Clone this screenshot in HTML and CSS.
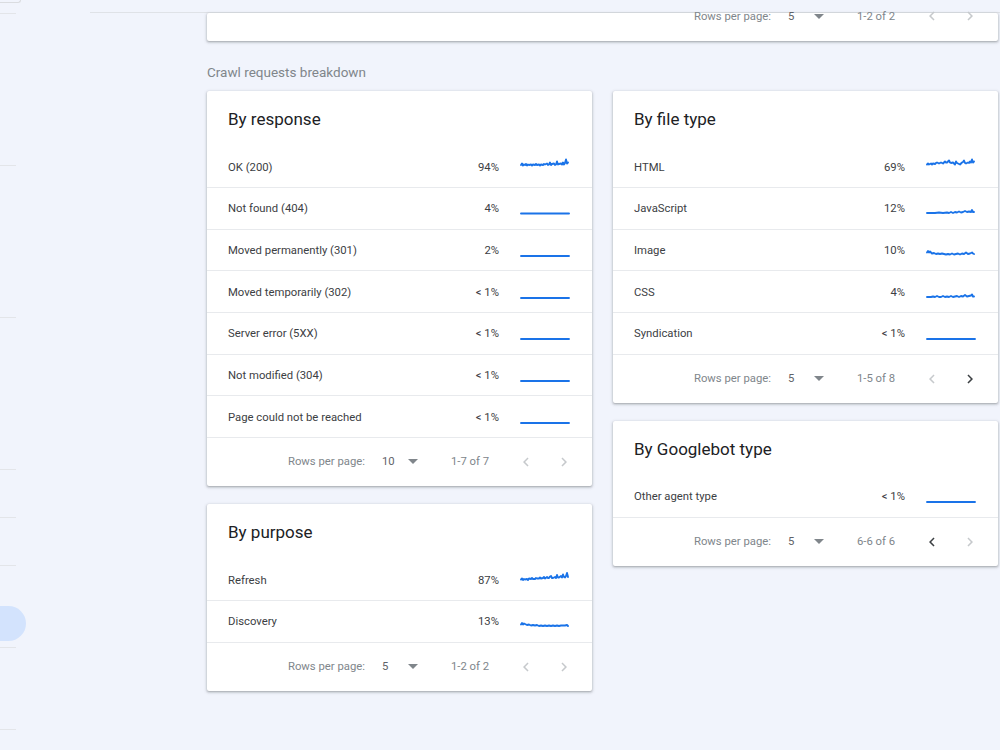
FILE: index.html
```html
<!DOCTYPE html>
<html lang="en">
<head>
<meta charset="utf-8">
<title>Crawl stats</title>
<link rel="stylesheet" href="styles.css">
</head>
<body>
<div class="app">
  <aside class="sidebar">
    <div class="nav-btn"></div>
    <div class="nav-div first"></div>
    <div class="gap-lg"></div>
    <div class="nav-div"></div>
    <div class="gap-lg"></div>
    <div class="nav-div"></div>
    <div class="gap-lg"></div>
    <div class="nav-div"></div>
    <div class="gap-sm"></div>
    <div class="nav-div"></div>
    <div class="gap-sm"></div>
    <div class="nav-div"></div>
    <div class="nav-pill"></div>
    <div class="nav-div"></div>
    <div class="gap-md"></div>
    <div class="nav-div"></div>
  </aside>

  <main class="main">
    <div class="topbar"></div>
    <div class="content">
      <section class="card card-top">
        <div class="pager">
          <span class="pager-label">Rows per page:</span>
          <span class="pager-select"><span class="pager-value">5</span><svg class="caret" viewBox="7 10 10 5" width="10" height="5"><path d="M7 10l5 5 5-5z"/></svg></span>
          <span class="pager-range">1-2 of 2</span>
          <span class="pager-btn off"><svg viewBox="0 0 24 24" width="18" height="18"><path d="M15.41 7.41L14 6l-6 6 6 6 1.41-1.41L10.83 12z"/></svg></span>
          <span class="pager-btn off"><svg viewBox="0 0 24 24" width="18" height="18"><path d="M10 6L8.59 7.41 13.17 12l-4.58 4.59L10 18l6-6z"/></svg></span>
        </div>
      </section>

      <h2 class="section-label">Crawl requests breakdown</h2>

      <div class="columns">
        <div class="column">
          <section class="card">
            <h3 class="card-title">By response</h3>
            <div class="row"><span class="row-label">OK (200)</span><span class="row-pct">94%</span><svg class="spark" viewBox="0 0 48 16"><polyline points="0,7 1,5.5 2,7.5 3,6.5 4,7 5,6 6,7.5 7,6.5 8,7 10,6.5 11,7.5 12,6.5 14,7 15,6 16,7 18,6.5 19,7.5 20,6.5 22,7 23,6 24,6.5 26,5.5 27,7 28,6.5 29,4.5 30,7 31,6 33,5.5 34,7 35,6.5 36,3.5 37,6.5 38,6 40,5.5 41,6.5 42,4.5 43,6.5 44,5 45,1.5 46,5.5 47,4.5"/></svg></div>
            <div class="row"><span class="row-label">Not found (404)</span><span class="row-pct">4%</span><svg class="spark" viewBox="0 0 48 16"><polyline points="0,14.5 48,14.5"/></svg></div>
            <div class="row"><span class="row-label">Moved permanently (301)</span><span class="row-pct">2%</span><svg class="spark" viewBox="0 0 48 16"><polyline points="0,15 48,15"/></svg></div>
            <div class="row"><span class="row-label">Moved temporarily (302)</span><span class="row-pct">&lt; 1%</span><svg class="spark" viewBox="0 0 48 16"><polyline points="0,15 48,15"/></svg></div>
            <div class="row"><span class="row-label">Server error (5XX)</span><span class="row-pct">&lt; 1%</span><svg class="spark" viewBox="0 0 48 16"><polyline points="0,15 48,15"/></svg></div>
            <div class="row"><span class="row-label">Not modified (304)</span><span class="row-pct">&lt; 1%</span><svg class="spark" viewBox="0 0 48 16"><polyline points="0,15 48,15"/></svg></div>
            <div class="row"><span class="row-label">Page could not be reached</span><span class="row-pct">&lt; 1%</span><svg class="spark" viewBox="0 0 48 16"><polyline points="0,15 48,15"/></svg></div>
            <div class="pager">
              <span class="pager-label">Rows per page:</span>
              <span class="pager-select"><span class="pager-value">10</span><svg class="caret" viewBox="7 10 10 5" width="10" height="5"><path d="M7 10l5 5 5-5z"/></svg></span>
              <span class="pager-range">1-7 of 7</span>
              <span class="pager-btn off"><svg viewBox="0 0 24 24" width="18" height="18"><path d="M15.41 7.41L14 6l-6 6 6 6 1.41-1.41L10.83 12z"/></svg></span>
              <span class="pager-btn off"><svg viewBox="0 0 24 24" width="18" height="18"><path d="M10 6L8.59 7.41 13.17 12l-4.58 4.59L10 18l6-6z"/></svg></span>
            </div>
          </section>

          <section class="card">
            <h3 class="card-title">By purpose</h3>
            <div class="row"><span class="row-label">Refresh</span><span class="row-pct">87%</span><svg class="spark" viewBox="0 0 48 16"><polyline points="0,8.5 1,7.5 2,9 3,8 4,8.5 6,8 7,9 8,7.5 10,8 11,7 12,8 14,8 15,7 16,7.5 18,7.5 19,6.5 20,7.5 22,7 23,6 24,7.5 26,6 27,7 28,7 29,5.5 30,5 31,7 32,7 34,6 35,7 36,4 37,6.5 38,6.5 40,5 41,6.5 42,3.5 43,6 44,6.5 45,5 46,2 47,6"/></svg></div>
            <div class="row"><span class="row-label">Discovery</span><span class="row-pct">13%</span><svg class="spark" viewBox="0 0 48 16"><polyline points="0,12.5 1,11 2,12.5 3,11.5 4,12 6,13 8,12.5 10,13.5 12,13 14,13.5 16,13 18,14 20,13.5 22,14 24,13.5 26,14 28,13.5 30,14 32,13.5 34,14 36,13.5 38,14 40,13.5 42,13.5 44,13.5 46,13 47,14"/></svg></div>
            <div class="pager">
              <span class="pager-label">Rows per page:</span>
              <span class="pager-select"><span class="pager-value">5</span><svg class="caret" viewBox="7 10 10 5" width="10" height="5"><path d="M7 10l5 5 5-5z"/></svg></span>
              <span class="pager-range">1-2 of 2</span>
              <span class="pager-btn off"><svg viewBox="0 0 24 24" width="18" height="18"><path d="M15.41 7.41L14 6l-6 6 6 6 1.41-1.41L10.83 12z"/></svg></span>
              <span class="pager-btn off"><svg viewBox="0 0 24 24" width="18" height="18"><path d="M10 6L8.59 7.41 13.17 12l-4.58 4.59L10 18l6-6z"/></svg></span>
            </div>
          </section>
        </div>

        <div class="column">
          <section class="card">
            <h3 class="card-title">By file type</h3>
            <div class="row"><span class="row-label">HTML</span><span class="row-pct">69%</span><svg class="spark" viewBox="0 0 48 16"><polyline points="0,6.5 1,5.5 2,6.5 4,5.5 5,6.5 6,5.5 8,6 9,5 10,4.5 12,5.5 13,5 14,4.5 16,5.5 17,4.5 18,3.5 19,4.5 20,4.5 22,2.5 23,4.5 24,5 26,4.5 27,5.5 28,6.5 29,3.5 30,5 31,5.5 33,6.5 34,5.5 35,4.5 36,4 37,2.5 38,5 39,5.5 41,4.5 42,5 43,3.5 44,4.5 45,1.5 46,4.5 47,3.5"/></svg></div>
            <div class="row"><span class="row-label">JavaScript</span><span class="row-pct">12%</span><svg class="spark" viewBox="0 0 48 16"><polyline points="0,14 4,14 8,14 12,13.5 16,14 20,13.5 22,14 24,13 26,14 28,13 30,13.5 32,12.5 34,13.5 36,13 38,12 40,13 42,12.5 44,13 45,11 46,13 47,13"/></svg></div>
            <div class="row"><span class="row-label">Image</span><span class="row-pct">10%</span><svg class="spark" viewBox="0 0 48 16"><polyline points="0,11.5 1,10 2,11.5 3,10.5 5,12.5 7,12 9,13 11,12.5 13,13 15,12.5 17,13 19,13.5 21,13 23,13.5 25,12.5 27,13.5 29,13 31,12.5 33,13.5 35,12.5 37,13 39,11.5 41,13 43,12.5 45,11.5 46,12.5 47,13"/></svg></div>
            <div class="row"><span class="row-label">CSS</span><span class="row-pct">4%</span><svg class="spark" viewBox="0 0 48 16"><polyline points="0,14 4,14 6,13.5 8,14 10,13 12,14 14,14 16,13 18,14 20,13.5 22,14 24,13 26,14 28,13.5 30,13 32,14 34,13 36,13.5 38,12 40,13.5 42,13 44,12.5 45,11.5 46,13.5 47,13.5"/></svg></div>
            <div class="row"><span class="row-label">Syndication</span><span class="row-pct">&lt; 1%</span><svg class="spark" viewBox="0 0 48 16"><polyline points="0,15 48,15"/></svg></div>
            <div class="pager">
              <span class="pager-label">Rows per page:</span>
              <span class="pager-select"><span class="pager-value">5</span><svg class="caret" viewBox="7 10 10 5" width="10" height="5"><path d="M7 10l5 5 5-5z"/></svg></span>
              <span class="pager-range">1-5 of 8</span>
              <span class="pager-btn off"><svg viewBox="0 0 24 24" width="18" height="18"><path d="M15.41 7.41L14 6l-6 6 6 6 1.41-1.41L10.83 12z"/></svg></span>
              <span class="pager-btn on"><svg viewBox="0 0 24 24" width="18" height="18"><path d="M10 6L8.59 7.41 13.17 12l-4.58 4.59L10 18l6-6z"/></svg></span>
            </div>
          </section>

          <section class="card">
            <h3 class="card-title">By Googlebot type</h3>
            <div class="row"><span class="row-label">Other agent type</span><span class="row-pct">&lt; 1%</span><svg class="spark" viewBox="0 0 48 16"><polyline points="0,15 48,15"/></svg></div>
            <div class="pager">
              <span class="pager-label">Rows per page:</span>
              <span class="pager-select"><span class="pager-value">5</span><svg class="caret" viewBox="7 10 10 5" width="10" height="5"><path d="M7 10l5 5 5-5z"/></svg></span>
              <span class="pager-range">6-6 of 6</span>
              <span class="pager-btn on"><svg viewBox="0 0 24 24" width="18" height="18"><path d="M15.41 7.41L14 6l-6 6 6 6 1.41-1.41L10.83 12z"/></svg></span>
              <span class="pager-btn off"><svg viewBox="0 0 24 24" width="18" height="18"><path d="M10 6L8.59 7.41 13.17 12l-4.58 4.59L10 18l6-6z"/></svg></span>
            </div>
          </section>
        </div>
      </div>
    </div>
  </main>
</div>
</body>
</html>
```

FILE: styles.css
```css
* { box-sizing: border-box; }

html, body {
  margin: 0;
  padding: 0;
  height: 750px;
  overflow: hidden;
  background: #f1f4fc;
  font-family: Roboto, "Liberation Sans", Arial, sans-serif;
  color: #3c4043;
}

.app {
  display: flex;
  height: 750px;
}

/* sidebar (mostly scrolled off) */
.sidebar {
  width: 90px;
  flex: none;
  display: flex;
  flex-direction: column;
}
.nav-btn {
  width: 21px;
  height: 3px;
  border: 1px solid #dadce0;
  border-top: none;
  border-left: none;
  border-radius: 0 0 8px 0;
}
.nav-div {
  width: 16px;
  height: 1px;
  background: #e3e5e9;
}
.nav-div.first { margin-top: 10px; }
.gap-lg { height: 151px; }
.gap-sm { height: 47px; }
.gap-md { height: 81px; }
.nav-pill {
  width: 26px;
  height: 35px;
  margin: 40px 0 6px;
  background: #d3e3fd;
  border-radius: 0 18px 18px 0;
}

/* main */
.main {
  flex: 1;
  min-width: 0;
  display: flex;
  flex-direction: column;
}
.topbar {
  height: 13px;
  flex: none;
  border-bottom: 1px solid #dfe2e7;
}
.content {
  flex: 1;
  padding: 0 2px 0 117px;
}

.card {
  background: #fff;
  border-radius: 2px;
  box-shadow: 0 1px 2px 0 rgba(60, 64, 67, 0.3), 0 1px 3px 1px rgba(60, 64, 67, 0.15);
}
/* card scrolled mostly out of view: only the lower part of its pager shows */
.card-top {
  height: 28px;
  display: flex;
  flex-direction: column;
  justify-content: flex-end;
}
.card-top .pager {
  height: 50px;
  flex: none;
}

.section-label {
  margin: 21px 0 9px;
  font-size: 13.5px;
  line-height: 20px;
  font-weight: 400;
  color: #80868b;
}

.columns {
  display: grid;
  grid-template-columns: 385px 385px;
  column-gap: 21px;
  align-items: start;
}
.column {
  display: flex;
  flex-direction: column;
  gap: 18px;
}

.card-title {
  margin: 0;
  padding: 16px 21px 0;
  height: 55.3px;
  font-size: 17px;
  line-height: 24px;
  font-weight: 400;
  color: #202124;
}

.row {
  display: flex;
  align-items: center;
  height: 41.67px;
  padding: 1px 23px 0 21px;
  border-bottom: 1px solid #e8eaed;
  font-size: 11.3px;
}
.row-label {
  flex: 1;
  color: #3c4043;
}
.row-pct {
  color: #3c4043;
  text-align: right;
}
.spark {
  width: 48px;
  height: 16px;
  margin-left: 22px;
  margin-bottom: 3px;
  flex: none;
  overflow: visible;
}
.spark polyline {
  fill: none;
  stroke: #1a73e8;
  stroke-width: 1.9;
  stroke-linejoin: round;
  stroke-linecap: round;
}

/* pager */
.pager {
  display: flex;
  justify-content: flex-end;
  align-items: center;
  height: 48px;
  padding-right: 16px;
  font-size: 11.3px;
  color: #80868b;
}
.pager-label { margin-right: 17px; }
.pager-select {
  width: 36px;
  margin-right: 33px;
  display: flex;
  justify-content: space-between;
  align-items: center;
}
.pager-value { color: #5f6368; }
.caret { fill: #80868b; }
.pager-range { width: 63px; white-space: nowrap; }
.pager-btn {
  width: 24px;
  height: 24px;
  display: flex;
  align-items: center;
  justify-content: center;
}
.pager-btn + .pager-btn { margin-left: 14px; }
.pager-btn.off svg { fill: #c6c9cc; }
.pager-btn.on svg { fill: #3c4043; }
```
